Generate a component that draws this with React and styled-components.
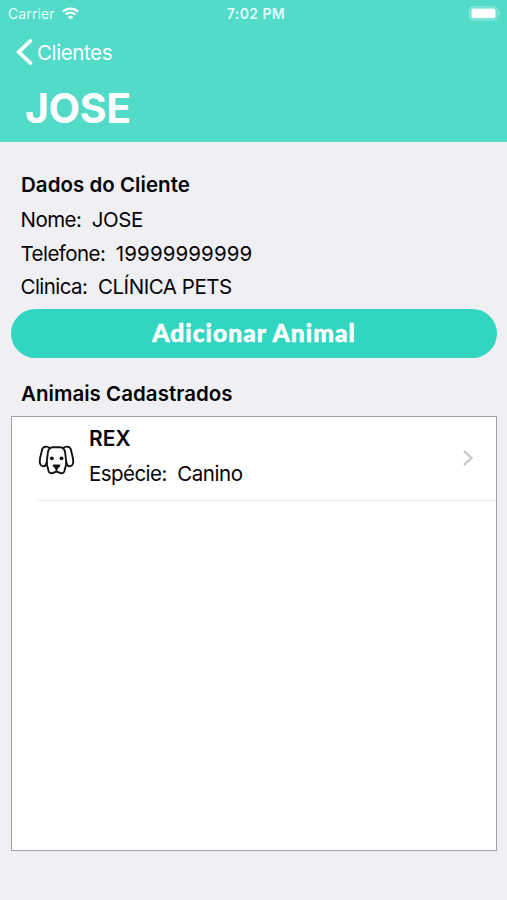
import React from "react";
import styled, { createGlobalStyle } from "styled-components";

const GlobalStyle = createGlobalStyle`
  * { box-sizing: border-box; }
  html, body { margin: 0; padding: 0; background: #efeff4; }
  h1, h2, h3, p, ul { margin: 0; padding: 0; }
  button { border: 0; padding: 0; background: none; font: inherit; color: inherit; }
`;

const Screen = styled.main`
  display: flex;
  flex-direction: column;
  width: 507px;
  height: 900px;
  overflow: hidden;
  background: #efeff4;
  color: #050507;
  font-family: Inter, "Liberation Sans", sans-serif;
`;

const Header = styled.header`
  flex: none;
  height: 142px;
  background: #51dbc8;
  color: #fff;
`;

const StatusBar = styled.div`
  display: grid;
  grid-template-columns: 1fr auto 1fr;
  align-items: center;
  height: 27px;
  padding: 0 5px 0 8px;
`;

const Carrier = styled.div`
  display: flex;
  align-items: center;
  gap: 7px;
  font-size: 14px;
  line-height: 27px;
  letter-spacing: 0.1px;
  color: #e6fffa;
`;

const Clock = styled.time`
  padding: 1px 0 0 2px;
  font-size: 14px;
  font-weight: 600;
  line-height: 26px;
  letter-spacing: 0.4px;
  color: #e6fffa;
`;

const BatteryIcon = styled.svg`
  justify-self: end;
`;

const BackButton = styled.button`
  display: flex;
  align-items: center;
  gap: 4px;
  height: 50px;
  margin-left: 16px;
  font-size: 20.5px;
  letter-spacing: -0.4px;
`;

const Title = styled.h1`
  margin: 6px 0 0 25px;
  font-size: 41px;
  font-weight: 700;
  line-height: 50px;
  letter-spacing: -0.4px;
`;

const Content = styled.section`
  display: flex;
  flex: 1;
  flex-direction: column;
  padding: 26px 10px 49px 11px;
`;

const SectionTitle = styled.h2`
  padding-left: 10px;
  font-size: 20.5px;
  font-weight: 600;
  line-height: 34px;
  letter-spacing: 0.03px;
`;

const Fields = styled.div`
  height: 103px;
  padding: 1px 0 0 9.5px;
`;

const Field = styled.p`
  display: flex;
  gap: 10.5px;
  font-size: 20.5px;
  line-height: 33.6px;
  letter-spacing: -0.55px;
`;

const Value = styled.span`
  letter-spacing: ${(p) => (p.$numeric ? "0.1px" : "-0.45px")};
`;

const AddButton = styled.button`
  flex: none;
  height: 49px;
  margin: 4px 0 19px;
  padding-bottom: 2px;
  border-radius: 25px;
  background: #32d6c0;
  color: #fff;
  font-family: Lato, "Open Sans", sans-serif;
  font-size: 24.5px;
  font-weight: 900;
  line-height: 47px;
  letter-spacing: 1.05px;
  -webkit-text-stroke: 0.5px #fff;
`;

const AnimalList = styled.ul`
  flex: 1;
  margin-top: 5px;
  border: 1px solid #a0a0a5;
  background: #fff;
  list-style: none;
`;

const AnimalRow = styled.li`
  display: flex;
  align-items: center;
  height: 84px;
  margin-left: 25px;
  padding-right: 22px;
  border-bottom: 1px solid #ededef;
`;

const AnimalInfo = styled.div`
  flex: 1;
  margin: -5px 0 0 14px;
`;

const AnimalName = styled.h3`
  font-size: 21px;
  font-weight: 600;
  line-height: 36px;
  letter-spacing: 0.1px;
`;

const DogSvg = styled.svg`
  margin-top: 3px;
`;

const Disclosure = styled.svg`
  margin-top: -2px;
`;

const DogIcon = () => (
  <DogSvg width="38" height="34" viewBox="0 0 38 34" fill="none" stroke="#111" strokeWidth="1.900" strokeLinecap="round" strokeLinejoin="round">
    <path d="M13 5C9.500 2.800 6.300 3.300 5.200 6.200L3 15.500C2.300 20 3.200 23 6 23.300C8 23.400 9.200 21.800 9.700 19.500L10.800 10C11.100 6.800 13 4.200 16 4.200H23C26 4.200 27.900 6.800 28.200 10L29.300 19.500C29.800 21.800 31 23.400 33 23.300C35.800 23 36.700 20 36 15.500L33.800 6.200C32.700 3.300 29.500 2.800 26 5" />
    <path d="M9.900 19.500V21.500C9.900 23.500 11.400 24.800 11.400 27.500C11.600 29.500 13.500 30.600 15.500 30L19.500 28.600L23.500 30C25.500 30.600 27.400 29.500 27.600 27.500C27.600 24.800 29.100 23.500 29.100 21.500V19.500M19.500 25V28.600" />
    <circle cx="14.800" cy="15.300" r="1.900" fill="#111" stroke="none" />
    <circle cx="24.500" cy="15.300" r="1.900" fill="#111" stroke="none" />
    <path d="M16.600 22.500H22.400L19.500 25.700Z" fill="#111" />
  </DogSvg>
);

export default function App() {
  return (
    <>
      <GlobalStyle />
      <Screen>
        <Header>
          <StatusBar>
            <Carrier>
              Carrier
              <svg width="17" height="13" viewBox="0 0 17 13" fill="none" stroke="#fff" strokeWidth="2.300">
                <path d="M.8 4.600C5.200 .500 11.800 .500 16.200 4.600M3.600 7.500C6.400 4.900 10.600 4.900 13.400 7.500" />
                <path d="M5.700 9.900C7.300 8.300 9.700 8.300 11.300 9.900L8.500 12.600Z" fill="#fff" stroke="none" />
              </svg>
            </Carrier>
            <Clock>7:02 PM</Clock>
            <BatteryIcon width="33" height="15" viewBox="0 0 33 15">
              <rect x=".7" y=".9" width="27.600" height="13" rx="3.500" fill="none" stroke="#a2ece1" />
              <rect x="2.400" y="2.600" width="24.200" height="9.600" rx="2" fill="#fff" />
              <path d="M29.700 5.300C31.200 6 31.200 8.800 29.700 9.500Z" fill="#a2ece1" />
            </BatteryIcon>
          </StatusBar>
          <BackButton>
            <svg width="17" height="28" viewBox="0 0 17 28" fill="none" stroke="#fff" strokeWidth="3.800" strokeLinecap="round">
              <path d="M14.300 3L2.800 14L14.300 25" />
            </svg>
            Clientes
          </BackButton>
          <Title>JOSE</Title>
        </Header>
        <Content>
          <SectionTitle>Dados do Cliente</SectionTitle>
          <Fields>
            <Field>
              <span>Nome:</span>
              <Value>JOSE</Value>
            </Field>
            <Field>
              <span>Telefone:</span>
              <Value $numeric>19999999999</Value>
            </Field>
            <Field>
              <span>Clinica:</span>
              <Value>CLÍNICA PETS</Value>
            </Field>
          </Fields>
          <AddButton>Adicionar Animal</AddButton>
          <SectionTitle>Animais Cadastrados</SectionTitle>
          <AnimalList>
            <AnimalRow>
              <DogIcon />
              <AnimalInfo>
                <AnimalName>REX</AnimalName>
                <Field>
                  <span>Espécie:</span>
                  <Value>Canino</Value>
                </Field>
              </AnimalInfo>
              <Disclosure width="12" height="18" viewBox="0 0 12 18" fill="none" stroke="#c5c5c9" strokeWidth="2.200">
                <path d="M2 2L9.500 9L2 16" />
              </Disclosure>
            </AnimalRow>
          </AnimalList>
        </Content>
      </Screen>
    </>
  );
}
